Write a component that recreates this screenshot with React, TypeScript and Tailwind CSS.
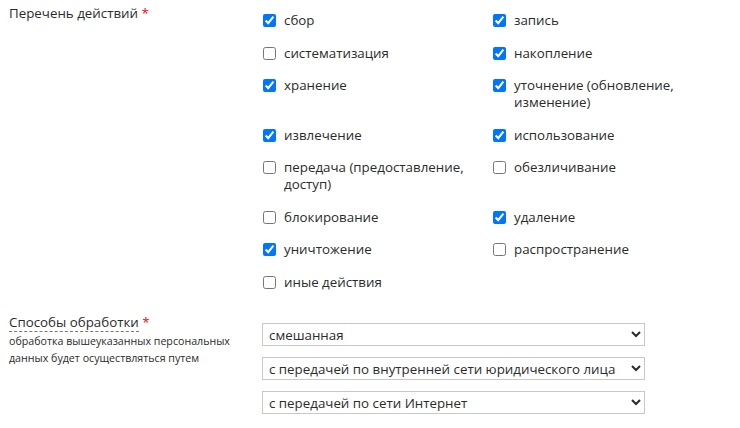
import React from "react";

const actions: { label: string; checked: boolean }[] = [
  { label: "сбор", checked: true },
  { label: "запись", checked: true },
  { label: "систематизация", checked: false },
  { label: "накопление", checked: true },
  { label: "хранение", checked: true },
  { label: "уточнение (обновление, изменение)", checked: true },
  { label: "извлечение", checked: true },
  { label: "использование", checked: true },
  { label: "передача (предоставление, доступ)", checked: false },
  { label: "обезличивание", checked: false },
  { label: "блокирование", checked: false },
  { label: "удаление", checked: true },
  { label: "уничтожение", checked: true },
  { label: "распространение", checked: false },
  { label: "иные действия", checked: false },
];

const methods = [
  ["смешанная", "автоматизированная", "неавтоматизированная"],
  ["с передачей по внутренней сети юридического лица", "без передачи по внутренней сети юридического лица"],
  ["с передачей по сети Интернет", "без передачи по сети Интернет"],
];

function Required() {
  return <span className="text-[#ff0000]"> *</span>;
}

export default function App() {
  return (
    <div className="min-h-screen bg-white pl-[9px] text-[13.33px] leading-[17px] text-[#2b2b2b] font-['Open_Sans',sans-serif]">
      <div className="flex">
        <div className="w-[254px] shrink-0 pt-[5px]">
          Перечень действий
          <Required />
        </div>
        <div className="grid grid-cols-[230px_230px] gap-y-[15.5px] pt-[12px]">
          {actions.map((a) => (
            <label key={a.label} className="flex items-start gap-[8px] pr-[10px]">
              <input type="checkbox" defaultChecked={a.checked} className="m-0 mt-[2px] h-[13px] w-[13px] shrink-0" />
              <span>{a.label}</span>
            </label>
          ))}
        </div>
      </div>

      <div className="mt-[23.5px] flex">
        <div className="w-[253px] shrink-0">
          <div>
            <span className="border-b border-dashed border-[#777]">Способы обработки</span>
            <Required />
          </div>
          <div className="mt-[2px] text-[10.67px] leading-[16.5px]">
            обработка вышеуказанных персональных данных будет осуществляться путем
          </div>
        </div>
        <div className="flex flex-col gap-[11px] pt-[9px]">
          {methods.map((opts) => (
            <select
              key={opts[0]}
              defaultValue={opts[0]}
              className="h-[23px] w-[383px] border border-[#c8c8c8] bg-white pl-[2px] text-[13.33px] text-[#2b2b2b]"
            >
              {opts.map((o) => (
                <option key={o}>{o}</option>
              ))}
            </select>
          ))}
        </div>
      </div>
    </div>
  );
}
